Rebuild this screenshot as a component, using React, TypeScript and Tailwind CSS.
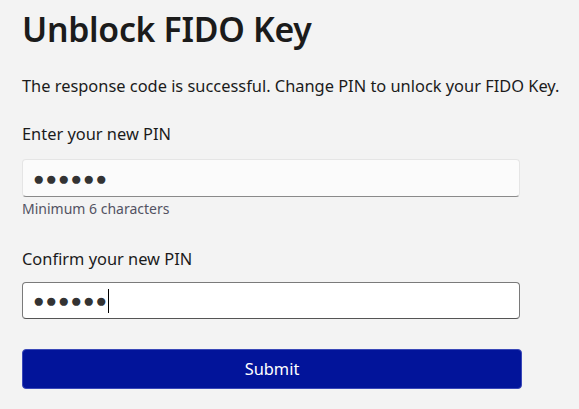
import React from 'react';

export default function App() {
  return (
    <div className="min-h-screen w-full bg-[#f3f3f3] text-[#1b1b1b] px-[22px] pt-[5px]" style={{ fontFamily: '"Noto Sans", "Open Sans", sans-serif' }}>
      <h1 className="text-[33.8px] leading-[48px] font-semibold tracking-[-0.3px]">Unblock FIDO Key</h1>
      <p className="mt-[21px] text-[16.4px] leading-[24px] whitespace-nowrap">
        The response code is successful. Change PIN to unlock your FIDO Key.
      </p>

      <form className="w-[498px] mt-[24px]" onSubmit={(e) => e.preventDefault()}>
        <label className="block text-[16.4px] leading-[24px]">Enter your new PIN</label>
        <div className="mt-[13px] h-[38px] rounded-[4px] border border-[#e5e5e5] border-b-[#8a8a8a] bg-[#fbfbfb] flex items-center px-[10px]">
          <span className="text-[19px] tracking-[1px] text-[#333]">●●●●●●</span>
        </div>
        <div className="mt-[2px] text-[14px] leading-[20px] text-[#525262]">Minimum 6 characters</div>

        <label className="block mt-[28px] text-[16.4px] leading-[24px]">Confirm your new PIN</label>
        <div className="mt-[11px] h-[37px] rounded-[4px] border border-[#7a7a7a] border-b-[#555] bg-white flex items-center px-[10px]">
          <span className="text-[19px] tracking-[1px] text-[#333]">●●●●●●</span>
          <span className="w-px h-[24px] bg-black" />
        </div>

        <button type="submit" className="mt-[30px] w-[500px] h-[40px] rounded-[4px] bg-[#02149a] border border-[#3a48b8] text-white text-[16.4px]">
          Submit
        </button>
      </form>
    </div>
  );
}
